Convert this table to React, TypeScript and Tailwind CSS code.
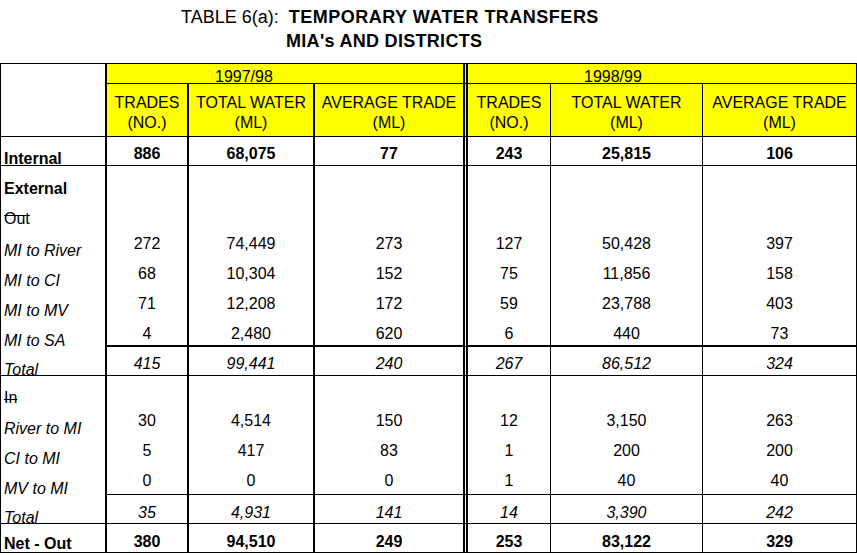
import React from "react";

type Row = {
  label: string;
  kind: "bold" | "italic" | "strikeHigh" | "strikeLow";
  vals: string[];
  numKind: "bold" | "regular" | "italic";
  labelPt: string;
  numPt: string;
  labelB: string;
  numB: string;
};

const COLB = [
  "border-l-2",
  "border-l-2",
  "border-l-2",
  "border-l-[5px] border-double",
  "border-l",
  "border-l",
];

const rows: Row[] = [
  { label: "Internal", kind: "bold", vals: ["886", "68,075", "77", "243", "25,815", "106"], numKind: "bold", labelPt: "pt-[14px]", numPt: "pt-[9px]", labelB: "border-b", numB: "border-b" },
  { label: "External", kind: "bold", vals: ["", "", "", "", "", ""], numKind: "regular", labelPt: "pt-[15px]", numPt: "pt-[10px]", labelB: "", numB: "" },
  { label: "Out", kind: "strikeHigh", vals: ["", "", "", "", "", ""], numKind: "regular", labelPt: "pt-[15px]", numPt: "pt-[10px]", labelB: "", numB: "" },
  { label: "MI to River", kind: "italic", vals: ["272", "74,449", "273", "127", "50,428", "397"], numKind: "regular", labelPt: "pt-[17px]", numPt: "pt-[10px]", labelB: "", numB: "" },
  { label: "MI to CI", kind: "italic", vals: ["68", "10,304", "152", "75", "11,856", "158"], numKind: "regular", labelPt: "pt-[17px]", numPt: "pt-[10px]", labelB: "", numB: "" },
  { label: "MI to MV", kind: "italic", vals: ["71", "12,208", "172", "59", "23,788", "403"], numKind: "regular", labelPt: "pt-[17px]", numPt: "pt-[10px]", labelB: "", numB: "" },
  { label: "MI to SA", kind: "italic", vals: ["4", "2,480", "620", "6", "440", "73"], numKind: "regular", labelPt: "pt-[17px]", numPt: "pt-[10px]", labelB: "", numB: "border-b-2" },
  { label: "Total", kind: "italic", vals: ["415", "99,441", "240", "267", "86,512", "324"], numKind: "italic", labelPt: "pt-[15px]", numPt: "pt-[9px]", labelB: "border-b", numB: "border-b" },
  { label: "In", kind: "strikeLow", vals: ["", "", "", "", "", ""], numKind: "regular", labelPt: "pt-[14px]", numPt: "pt-[7px]", labelB: "", numB: "" },
  { label: "River to MI", kind: "italic", vals: ["30", "4,514", "150", "12", "3,150", "263"], numKind: "regular", labelPt: "pt-[15px]", numPt: "pt-[7px]", labelB: "", numB: "" },
  { label: "CI to MI", kind: "italic", vals: ["5", "417", "83", "1", "200", "200"], numKind: "regular", labelPt: "pt-[15px]", numPt: "pt-[7px]", labelB: "", numB: "" },
  { label: "MV to MI", kind: "italic", vals: ["0", "0", "0", "1", "40", "40"], numKind: "regular", labelPt: "pt-[15px]", numPt: "pt-[7px]", labelB: "", numB: "border-b" },
  { label: "Total", kind: "italic", vals: ["35", "4,931", "141", "14", "3,390", "242"], numKind: "italic", labelPt: "pt-[15px]", numPt: "pt-[10px]", labelB: "border-b", numB: "border-b" },
  { label: "Net - Out", kind: "bold", vals: ["380", "94,510", "249", "253", "83,122", "329"], numKind: "bold", labelPt: "pt-[12px]", numPt: "pt-[10px]", labelB: "", numB: "" },
];

const LABEL_KIND: Record<Row["kind"], string> = {
  bold: "font-bold",
  italic: "italic",
  strikeHigh: "underline decoration-1 underline-offset-[-9px] [text-decoration-skip-ink:none]",
  strikeLow: "underline decoration-1 underline-offset-[-4px] [text-decoration-skip-ink:none]",
};

const NUM_KIND: Record<Row["numKind"], string> = {
  bold: "font-bold",
  regular: "",
  italic: "italic",
};

export default function App() {
  return (
    <div className="w-[857px] h-[555px] bg-white text-black font-['Liberation_Sans',Arial,sans-serif] overflow-hidden">
      <div className="h-[63px] pt-[5px] text-[18px] leading-[24px]">
        <div className="pl-[181px] whitespace-pre">
          <span>TABLE 6(a):  </span>
          <span className="font-bold tracking-[0.5px]">TEMPORARY WATER TRANSFERS</span>
        </div>
        <div className="pl-[286px] font-bold tracking-[0.3px]">MIA's AND DISTRICTS</div>
      </div>

      <div className="w-[857px] border border-black grid grid-cols-[104px_82px_126px_150px_87px_152px_154px] grid-rows-[20px_53px_29px_30px_30px_30px_30px_30px_31px_29px_30px_30px_30px_29px_29px_28px] text-[16px] leading-[16px]">
        {/* header */}
        <div className="row-span-2 border-b border-black"></div>
        <div className="col-span-3 border-l-2 border-b border-black bg-[#ffff00] pt-[5px] pl-[108px]">1997/98</div>
        <div className="col-span-3 border-l-[5px] border-double border-b border-black bg-[#ffff00] pt-[5px] pl-[116px]">1998/99</div>
        {["TRADES|(NO.)", "TOTAL WATER|(ML)", "AVERAGE TRADE|(ML)", "TRADES|(NO.)", "TOTAL WATER|(ML)", "AVERAGE TRADE|(ML)"].map((t, i) => {
          const [a, b] = t.split("|");
          return (
            <div key={"h" + i} className={`${COLB[i]} border-b border-black bg-[#ffff00] pt-[9px] text-center leading-[20px]`}>
              <div>{a}</div>
              <div>{b}</div>
            </div>
          );
        })}

        {rows.map((r, ri) => (
          <React.Fragment key={"r" + ri}>
            <div className={`${r.labelB} border-black ${r.labelPt} pl-[3px] whitespace-nowrap`}>
              <span className={LABEL_KIND[r.kind]}>{r.label}</span>
            </div>
            {r.vals.map((v, ci) => (
              <div key={ci} className={`${COLB[ci]} ${r.numB} border-black ${r.numPt} text-center ${NUM_KIND[r.numKind]}`}>
                {v}
              </div>
            ))}
          </React.Fragment>
        ))}
      </div>
    </div>
  );
}
